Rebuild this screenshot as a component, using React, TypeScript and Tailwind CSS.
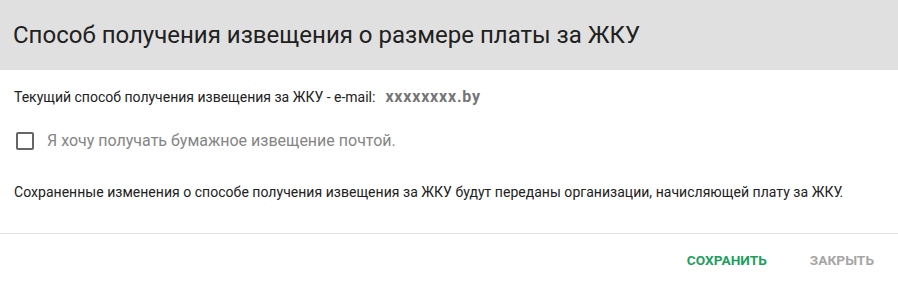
export default function App() {
  return (
    <div className="w-[898px] h-[284px] bg-white font-['Roboto',sans-serif] text-[#212121]">
      <div className="h-[70px] bg-[#e0e0e0] flex items-center px-[13px]">
        <h1 className="text-[24px] leading-none text-[#212121]">
          Способ получения извещения о размере платы за ЖКУ
        </h1>
      </div>

      <div className="px-[14px]">
        <div className="flex items-center h-[20px] mt-[17px] text-[14px]">
          <span>Текущий способ получения извещения за ЖКУ - e-mail:</span>
          <span className="ml-[10px] text-[16px] tracking-[0.8px] font-bold text-[#757575]">xxxxxxxx.by</span>
        </div>

        <label className="flex items-center gap-[13px] mt-[22px] pl-[2px] h-[24px]">
          <span className="w-[18px] h-[18px] border-2 border-[#666] rounded-[2px]" />
          <span className="text-[16px] text-[#858585]">Я хочу получать бумажное извещение почтой.</span>
        </label>

        <p className="mt-[29px] text-[14px] leading-[20px] tracking-[0.03px]">
          Сохраненные изменения о способе получения извещения за ЖКУ будут переданы организации, начисляющей плату за ЖКУ.
        </p>
      </div>

      <div className="mt-[31px] border-t border-[#e0e0e0]" />

      <div className="flex justify-end items-center h-[53px] pr-[24px] gap-[43px]">
        <button className="text-[13.7px] font-bold uppercase text-[#1e9e5c]">Сохранить</button>
        <button className="text-[13.7px] font-bold uppercase text-[#a6a6a6]">Закрыть</button>
      </div>
    </div>
  );
}
